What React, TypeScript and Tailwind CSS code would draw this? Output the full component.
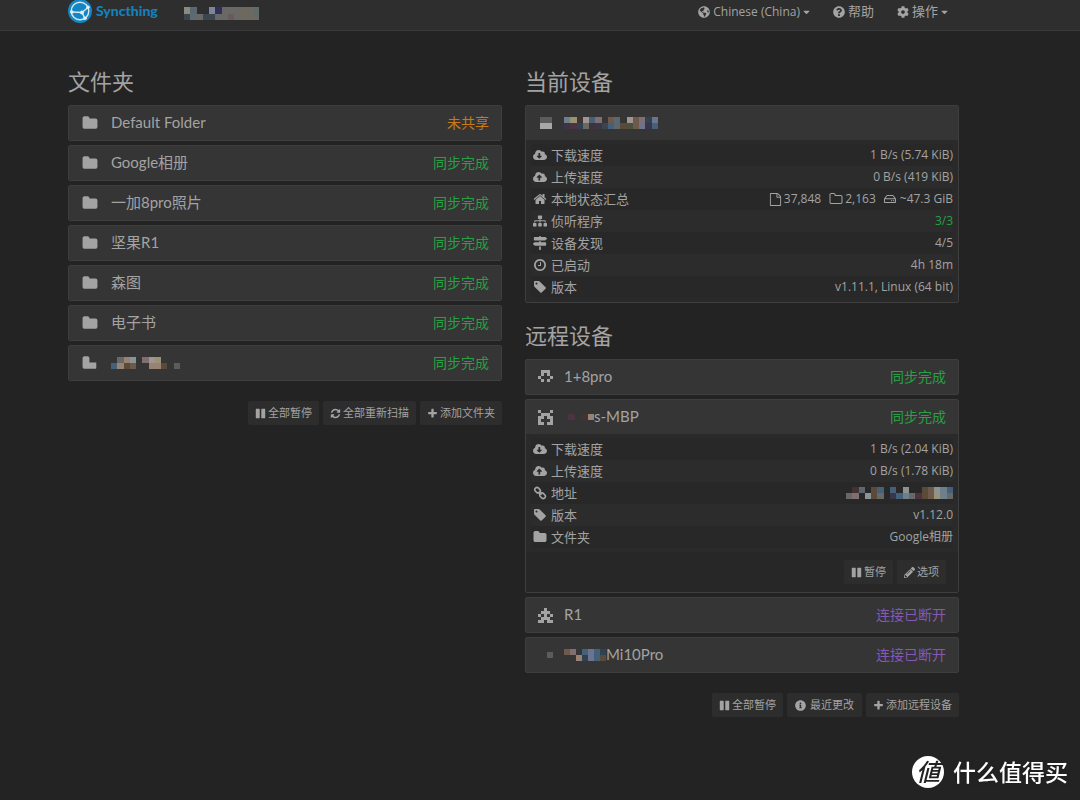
import clsx from "clsx"
import type { ReactNode } from "react"
import {
  FaCaretDown,
  FaCloudDownloadAlt,
  FaCloudUploadAlt,
  FaCog,
  FaGlobeAmericas,
  FaInfoCircle,
  FaMapSigns,
  FaPencilAlt,
  FaQuestionCircle,
  FaRegHdd,
  FaSitemap,
} from "react-icons/fa"

type Icon = (props: { className?: string }) => ReactNode

const icon = (d: string): Icon =>
  function PathIcon({ className }) {
    return (
      <svg className={className} viewBox="0 0 1792 1792" fill="currentColor" aria-hidden="true">
        <path d={d} />
      </svg>
    )
  }

const Folder = icon(
  "M1728 608v704q0 92-66 158t-158 66h-1216q-92 0-158-66t-66-158v-960q0-92 66-158t158-66h320q92 0 158 66t66 158v32h672q92 0 158 66t66 158z"
)
const FolderCut = icon("M1600 850v600q0 86-96 86h-1216q-92 0-158-66t-66-158v-960q0-92 66-158t158-66h320q92 0 158 66t66 158v498z")
const FolderOutline = icon(
  "M1600 1312v-704q0-40-28-68t-68-28h-704q-40 0-68-28t-28-68v-64q0-40-28-68t-68-28h-320q-40 0-68 28t-28 68v960q0 40 28 68t68 28h1216q40 0 68-28t28-68zm128-704v704q0 92-66 158t-158 66h-1216q-92 0-158-66t-66-158v-960q0-92 66-158t158-66h320q92 0 158 66t66 158v32h672q92 0 158 66t66 158z"
)
const File = icon(
  "M1596 380q28 28 48 76t20 88v1152q0 40-28 68t-68 28h-1344q-40 0-68-28t-28-68v-1600q0-40 28-68t68-28h896q40 0 88 20t76 48zm-444-244v376h376q-10-29-22-41l-313-313q-12-12-41-22zm384 1528v-1024h-416q-40 0-68-28t-28-68v-416h-768v1536h1280z"
)
const Home = icon(
  "M1472 992v480q0 26-19 45t-45 19h-384v-384h-256v384h-384q-26 0-45-19t-19-45v-480q0-1 .5-3t.5-3l575-474 575 474q1 2 1 6zm223-69l-62 74q-8 9-21 11h-3q-13 0-21-7l-692-577-692 577q-12 8-24 7-13-2-21-11l-62-74q-8-10-7-23.5t11-21.5l719-599q32-26 76-26t76 26l244 204v-195q0-14 9-23t23-9h192q14 0 23 9t9 23v408l219 182q10 8 11 21.5t-7 23.5z"
)
const Clock = icon(
  "M1024 544v448q0 14-9 23t-23 9h-320q-14 0-23-9t-9-23v-64q0-14 9-23t23-9h224v-352q0-14 9-23t23-9h64q14 0 23 9t9 23zm416 352q0-148-73-273t-198-198-273-73-273 73-198 198-73 273 73 273 198 198 273 73 273-73 198-198 73-273zm224 0q0 209-103 385.5t-279.5 279.5-385.5 103-385.5-103-279.5-279.5-103-385.5 103-385.5 279.5-279.5 385.5-103 385.5 103 279.5 279.5 103 385.5z"
)
const Tag = icon(
  "M576 448q0-53-37.5-90.5t-90.5-37.5-90.5 37.5-37.5 90.5 37.5 90.5 90.5 37.5 90.5-37.5 37.5-90.5zm1067 576q0 53-37 90l-491 492q-39 37-91 37-53 0-90-37l-715-716q-38-37-64.5-101t-26.5-117v-416q0-52 38-90t90-38h416q53 0 117 26.5t102 64.5l715 714q37 39 37 91z"
)
const Refresh = icon(
  "M1639 1056q0 5-1 7-64 268-268 434.5t-478 166.5q-146 0-282.5-55t-243.5-157l-129 129q-19 19-45 19t-45-19-19-45v-448q0-26 19-45t45-19h448q26 0 45 19t19 45-19 45l-137 137q71 66 161 102t187 36q134 0 250-65t186-179q11-17 53-117 8-23 30-23h192q13 0 22.5 9.5t9.5 22.5zm25-800v448q0 26-19 45t-45 19h-448q-26 0-45-19t-19-45 19-45l138-138q-148-137-349-137-134 0-250 65t-186 179q-11 17-53 117-8 23-30 23h-199q-13 0-22.5-9.5t-9.5-22.5v-7q65-268 270-434.5t480-166.5q146 0 284 55.5t245 156.5l130-129q19-19 45-19t45 19 19 45z"
)
const Plus = icon(
  "M1600 736v192q0 40-28 68t-68 28h-416v416q0 40-28 68t-68 28h-192q-40 0-68-28t-28-68v-416h-416q-40 0-68-28t-28-68v-192q0-40 28-68t68-28h416v-416q0-40 28-68t68-28h192q40 0 68 28t28 68v416h416q40 0 68 28t28 68z"
)
const Pause = icon(
  "M1664 192v1408q0 26-19 45t-45 19h-512q-26 0-45-19t-19-45v-1408q0-26 19-45t45-19h512q26 0 45 19t19 45zm-896 0v1408q0 26-19 45t-45 19h-512q-26 0-45-19t-19-45v-1408q0-26 19-45t45-19h512q26 0 45 19t19 45z"
)

function Chain({ className }: { className?: string }) {
  return (
    <svg className={className} viewBox="0 0 14 14" fill="none" stroke="currentColor" strokeWidth="1.6" aria-hidden="true">
      <rect x="1.6" y="2.1" width="6" height="4.4" rx="2.2" transform="rotate(45 4.6 4.3)" />
      <rect x="6.6" y="7.6" width="6" height="4.4" rx="2.2" transform="rotate(45 9.6 9.8)" />
      <path d="m5.6 5.6 3 3" />
    </svg>
  )
}

type Status = "unshared" | "synced" | "disconnected"

const statusLabel: Record<Status, string> = {
  unshared: "未共享",
  synced: "同步完成",
  disconnected: "连接已断开",
}

const statusColor: Record<Status, string> = {
  unshared: "text-[#c77b12]",
  synced: "text-[#27a043]",
  disconnected: "text-[#8757b3]",
}

// "." is an empty cell, anything else is looked up in the palette
const palette: Record<string, string> = {
  a: "#8b8a80",
  b: "#5b6872",
  c: "#3c454e",
  d: "#686966",
  e: "#7d869b",
  f: "#302f5c",
  g: "#5f6a6c",
  h: "#6b5a5c",
  i: "#6b6960",
  j: "#9a8272",
  k: "#6e5a4a",
  l: "#44607a",
  m: "#8b9494",
  n: "#413233",
  o: "#a0958f",
  p: "#806f70",
  q: "#2f4250",
  r: "#5a4a38",
  s: "#6b738f",
  t: "#3a3549",
  u: "#a8a8a8",
  v: "#5c5c5c",
  w: "#9a9274",
  x: "#4a5040",
  y: "#6d808a",
  z: "#4c3342",
}

function Mosaic({ rows, className }: { rows: string[]; className?: string }) {
  return (
    <svg
      className={className}
      viewBox={`0 0 ${rows[0].length} ${rows.length}`}
      preserveAspectRatio="none"
      shapeRendering="crispEdges"
      aria-hidden="true"
    >
      {rows.flatMap((row, y) =>
        [...row].map((c, x) =>
          c === "." ? null : <rect key={`${x}-${y}`} x={x} y={y} width="1" height="1" fill={palette[c]} />
        )
      )}
    </svg>
  )
}

function Identicon({ rows }: { rows: string[] }) {
  return (
    <svg className="h-[15px] w-[15px]" viewBox="0 0 5 5" fill="currentColor" shapeRendering="crispEdges" aria-hidden="true">
      {rows.flatMap((row, y) =>
        [...row].map((c, x) => (c === "#" ? <rect key={`${x}-${y}`} x={x} y={y} width="1" height="1" /> : null))
      )}
    </svg>
  )
}

function Logo() {
  return (
    <svg className="h-6 w-6 shrink-0" viewBox="0 0 24 24" aria-hidden="true">
      <circle cx="12" cy="12" r="12" fill="#1287c4" />
      <g fill="none" stroke="#d8e6ee" strokeWidth="1.4">
        <circle cx="12" cy="12" r="8.8" />
        <path d="M14 13.5 20 8.5M14 13.5 3.6 13M14 13.5l3 6" />
      </g>
      <g fill="#e4edf2">
        <circle cx="14" cy="13.5" r="2" />
        <circle cx="20" cy="8.3" r="1.8" />
        <circle cx="3.8" cy="13" r="1.8" />
        <circle cx="17" cy="19.2" r="1.8" />
      </g>
    </svg>
  )
}

type HeadingProps = { icon: ReactNode; name: ReactNode; status?: Status; device?: boolean }

function PanelHeading({ icon, name, status, device }: HeadingProps) {
  return (
    <button type="button" className="flex h-[34px] w-full items-center bg-[#353535] px-3 text-left text-sm">
      <span className={clsx("flex justify-center", device ? "mr-[11px] w-[15px]" : "mr-3 w-[18px]")}>{icon}</span>
      <span className="flex-1 font-[Lato,'Noto_Sans_CJK_SC',sans-serif] text-[15px]">{name}</span>
      {status && <span className={statusColor[status]}>{statusLabel[status]}</span>}
    </button>
  )
}

function Panel({ children }: { children: ReactNode }) {
  return <section className="overflow-hidden rounded-xs border border-[#3e3e3e] bg-[#2a2a2a]">{children}</section>
}

type Detail = { icon: Icon; label: string; value: ReactNode; className?: string }

function DetailTable({ details }: { details: Detail[] }) {
  return (
    <div className="px-[5px] py-1">
      <table className="w-full">
        <tbody>
          {details.map(({ icon: Icon, label, value, className }) => (
            <tr key={label} className="h-[22px] odd:bg-[#282828] even:bg-[#2c2c2c]">
              <th scope="row" className="py-0 pl-0.5 text-left text-[13px] leading-5 font-normal">
                <span className="flex items-center gap-1">
                  <Icon className="h-[14px] w-[14px]" />
                  {label}
                </span>
              </th>
              <td className={clsx("py-0 text-right text-xs leading-5", className)}>{value}</td>
            </tr>
          ))}
        </tbody>
      </table>
    </div>
  )
}

function SmallButton({ icon: Icon, wide, children }: { icon: Icon; wide?: boolean; children: ReactNode }) {
  return (
    <button
      type="button"
      className={clsx("flex h-6 items-center rounded-xs bg-[#2d2d2d] text-[11px]", wide ? "gap-1 px-2" : "gap-0.5 px-[7px]")}
    >
      <Icon className="h-[11px] w-[11px]" />
      {children}
    </button>
  )
}

const folders: { name: string; status: Status }[] = [
  { name: "Default Folder", status: "unshared" },
  { name: "Google相册", status: "synced" },
  { name: "一加8pro照片", status: "synced" },
  { name: "坚果R1", status: "synced" },
  { name: "森图", status: "synced" },
  { name: "电子书", status: "synced" },
]

const localDetails: Detail[] = [
  { icon: FaCloudDownloadAlt, label: "下载速度", value: "1 B/s (5.74 KiB)" },
  { icon: FaCloudUploadAlt, label: "上传速度", value: "0 B/s (419 KiB)" },
  {
    icon: Home,
    label: "本地状态汇总",
    value: (
      <span className="flex items-center justify-end gap-2">
        <span className="flex items-center gap-0.5">
          <File className="h-[13px] w-[13px]" /> 37,848
        </span>
        <span className="flex items-center gap-0.5">
          <FolderOutline className="h-[14px] w-[14px]" /> 2,163
        </span>
        <span className="flex items-center gap-1">
          <FaRegHdd /> ~47.3 GiB
        </span>
      </span>
    ),
  },
  { icon: FaSitemap, label: "侦听程序", value: "3/3", className: "text-[#27a043]" },
  { icon: FaMapSigns, label: "设备发现", value: "4/5" },
  { icon: Clock, label: "已启动", value: "4h 18m" },
  { icon: Tag, label: "版本", value: "v1.11.1, Linux (64 bit)" },
]

const remoteDetails: Detail[] = [
  { icon: FaCloudDownloadAlt, label: "下载速度", value: "1 B/s (2.04 KiB)" },
  { icon: FaCloudUploadAlt, label: "上传速度", value: "0 B/s (1.78 KiB)" },
  {
    icon: Chain,
    label: "地址",
    value: <Mosaic className="ml-auto h-3 w-[107px]" rows={[".nb.rl.l.m..rkmyl", "dp.mrd.tlydzrkwyd"]} />,
  },
  { icon: Tag, label: "版本", value: "v1.12.0" },
  { icon: Folder, label: "文件夹", value: "Google相册" },
]

export default function App() {
  return (
    <div className="min-h-screen bg-[#232323] font-['Open_Sans','Noto_Sans_CJK_SC',sans-serif] text-[#a3a3a3]">
      <header className="border-b border-[#3a3a3a] bg-[#2e2e2e]">
        <nav className="flex h-[30px] items-start justify-between overflow-hidden pr-[132px] pl-[68px] text-xs">
          <div className="flex h-[22px] items-center">
            <a href="#" className="flex items-center gap-1 font-[Lato,sans-serif] text-sm font-black text-[#1481bd]">
              <Logo />
              Syncthing
            </a>
            <Mosaic className="mt-1 ml-[26px] h-[13px] w-[75px]" rows={["ab..efdddiig", "cgdccddhdiid"]} />
          </div>
          <div className="flex h-6 items-center gap-[23px]">
            <button type="button" className="flex items-center gap-[3px]">
              <FaGlobeAmericas className="h-3 w-3" />
              Chinese (China)
              <FaCaretDown className="h-[10px] w-[7px]" />
            </button>
            <a href="#" className="flex items-center gap-[3px]">
              <FaQuestionCircle className="h-3 w-3" />
              <span className="text-[13px]">帮助</span>
            </a>
            <button type="button" className="flex items-center gap-[3px]">
              <FaCog className="h-3 w-3" />
              <span className="text-[13px]">操作</span>
              <FaCaretDown className="h-[10px] w-[7px]" />
            </button>
          </div>
        </nav>
      </header>

      <main className="grid grid-cols-2 items-start gap-[23px] pt-[34px] pr-[121px] pl-[68px]">
        <div>
          <h3 className="mb-2 text-[22px] leading-8">文件夹</h3>
          <div className="flex flex-col gap-1">
            {folders.map((f) => (
              <Panel key={f.name}>
                <PanelHeading icon={<Folder className="h-4 w-4" />} name={f.name} status={f.status} />
              </Panel>
            ))}
            <Panel>
              <PanelHeading
                icon={<FolderCut className="h-4 w-4" />}
                name={<Mosaic className="h-3 w-[69px]" rows={[".djm.pow...", "ljrk..jjr.v"]} />}
                status="synced"
              />
            </Panel>
          </div>
          <div className="mt-5 flex justify-end gap-1">
            <SmallButton icon={Pause}>全部暂停</SmallButton>
            <SmallButton icon={Refresh}>全部重新扫描</SmallButton>
            <SmallButton icon={Plus}>添加文件夹</SmallButton>
          </div>
        </div>

        <div>
          <h3 className="mb-2 text-[22px] leading-8">当前设备</h3>
          <Panel>
            <PanelHeading
              device
              icon={<Mosaic className="h-3 w-3" rows={["vv", "uu"]} />}
              name={<Mosaic className="h-3 w-[94px]" rows={["ywnolp.kb.okpqs", "tzqdntclbrxkstl"]} />}
            />
            <DetailTable details={localDetails} />
          </Panel>

          <h3 className="mt-4 mb-2 text-[22px] leading-8">远程设备</h3>
          <div className="flex flex-col gap-1">
            <Panel>
              <PanelHeading
                device
                icon={<Identicon rows={[".###.", ".#.#.", "#...#", ".#.#.", "....."]} />}
                name="1+8pro"
                status="synced"
              />
            </Panel>
            <Panel>
              <PanelHeading
                device
                icon={<Identicon rows={["#...#", ".###.", "##.##", "#...#", "##.##"]} />}
                name={
                  <span className="flex items-center pl-1">
                    <Mosaic className="h-[6px] w-[26px]" rows={["z.nj"]} />
                    s-MBP
                  </span>
                }
                status="synced"
              />
              <DetailTable details={remoteDetails} />
              <div className="flex justify-end gap-1 bg-[#272727] px-3 py-2">
                <SmallButton icon={Pause}>暂停</SmallButton>
                <SmallButton icon={FaPencilAlt}>选项</SmallButton>
              </div>
            </Panel>
            <Panel>
              <PanelHeading
                device
                icon={<Identicon rows={["..#..", ".###.", "#.#.#", ".###.", "##.##"]} />}
                name="R1"
                status="disconnected"
              />
            </Panel>
            <Panel>
              <PanelHeading
                device
                icon={<Mosaic className="ml-2 h-[6px] w-[6px]" rows={["v"]} />}
                name={
                  <span className="flex items-center">
                    <Mosaic className="h-3 w-[42px]" rows={["kp.lslq", "..jqslr"]} />
                    Mi10Pro
                  </span>
                }
                status="disconnected"
              />
            </Panel>
          </div>
          <div className="mt-5 flex justify-end gap-1">
            <SmallButton icon={Pause}>全部暂停</SmallButton>
            <SmallButton icon={FaInfoCircle} wide>
              最近更改
            </SmallButton>
            <SmallButton icon={Plus}>添加远程设备</SmallButton>
          </div>
        </div>
      </main>

      <div className="fixed right-3 bottom-[11px] flex items-center gap-[9px] text-white">
        <span className="flex h-8 w-8 items-center justify-center rounded-full bg-white text-2xl font-medium text-[#232323] italic">
          値
        </span>
        <span className="text-[23px] font-medium drop-shadow-sm">什么值得买</span>
      </div>
    </div>
  )
}
